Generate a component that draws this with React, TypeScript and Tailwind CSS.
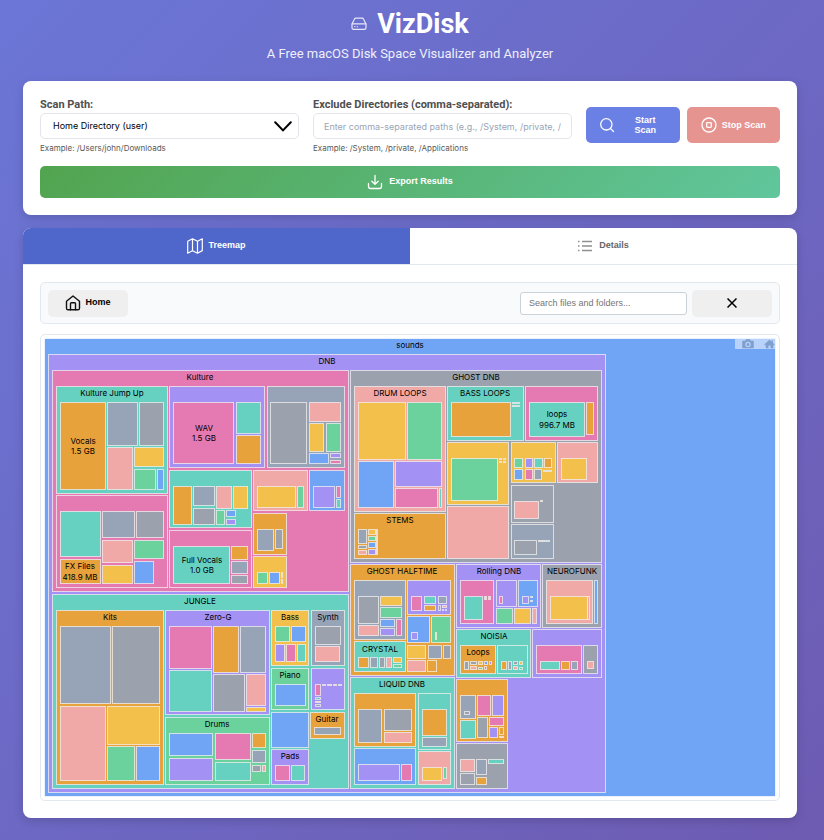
import { useState } from "react";

type Tile = [color: keyof typeof PALETTE, x1: number, y1: number, x2: number, y2: number];
type Label = [text: string, x: number, y: number];

const PALETTE = {
  B: "#70a5f6",
  P: "#a391f4",
  K: "#e57ab3",
  T: "#66d1c0",
  O: "#e8a23b",
  S: "#97a4b7",
  G: "#9ba2ae",
  R: "#f0a9a7",
  Y: "#f3c04c",
  E: "#6bd19d",
};

const TILES: Tile[] = [
  ["P", 48, 354, 606, 793],

  // Kulture
  ["K", 52, 370, 349, 592],
  ["T", 56, 386, 168, 494],
  ["O", 60, 402, 106, 490],
  ["S", 107, 402, 138, 446],
  ["G", 139, 402, 164, 446],
  ["R", 107, 447, 133, 490],
  ["Y", 134, 447, 164, 467],
  ["E", 134, 469, 156, 490],
  ["B", 157, 469, 164, 490],
  ["K", 56, 495, 168, 588],
  ["T", 60, 511, 101, 557],
  ["O", 60, 559, 101, 584],
  ["S", 102, 511, 135, 538],
  ["G", 136, 511, 164, 538],
  ["R", 102, 540, 133, 563],
  ["Y", 102, 565, 133, 584],
  ["E", 134, 540, 164, 559],
  ["B", 134, 561, 154, 584],
  ["P", 169, 386, 265, 468],
  ["K", 173, 402, 234, 464],
  ["T", 236, 402, 261, 434],
  ["O", 236, 435, 261, 464],
  ["S", 267, 386, 345, 468],
  ["G", 270, 402, 307, 464],
  ["R", 309, 402, 341, 422],
  ["Y", 309, 423, 324, 452],
  ["E", 326, 423, 341, 452],
  ["B", 309, 453, 329, 464],
  ["P", 330, 453, 341, 458],
  ["K", 330, 460, 341, 464],
  ["T", 169, 470, 252, 528],
  ["O", 173, 486, 192, 525],
  ["S", 193, 486, 215, 506],
  ["G", 193, 508, 215, 525],
  ["R", 216, 486, 232, 509],
  ["Y", 233, 486, 248, 509],
  ["E", 216, 510, 225, 525],
  ["B", 226, 510, 236, 517],
  ["P", 226, 519, 236, 525],
  ["R", 253, 470, 308, 511],
  ["Y", 257, 486, 296, 508],
  ["E", 297, 486, 304, 508],
  ["B", 309, 470, 345, 511],
  ["P", 313, 486, 335, 508],
  ["K", 336, 486, 341, 498],
  ["T", 336, 499, 341, 508],
  ["K", 169, 530, 252, 588],
  ["T", 173, 546, 230, 584],
  ["O", 231, 546, 248, 560],
  ["S", 231, 561, 248, 574],
  ["G", 231, 575, 248, 584],
  ["O", 253, 513, 287, 555],
  ["S", 257, 529, 274, 551],
  ["G", 275, 529, 283, 549],
  ["Y", 253, 556, 287, 588],
  ["E", 257, 572, 268, 584],
  ["B", 269, 572, 280, 584],
  ["Y", 281, 572, 283, 578],
  ["R", 281, 579, 283, 584],

  // Jungle
  ["T", 52, 594, 349, 789],
  ["O", 56, 610, 164, 785],
  ["S", 60, 626, 111, 704],
  ["G", 112, 626, 160, 704],
  ["R", 60, 706, 106, 781],
  ["Y", 107, 706, 160, 745],
  ["E", 107, 746, 135, 781],
  ["B", 136, 746, 160, 781],
  ["P", 165, 610, 270, 715],
  ["K", 169, 626, 212, 669],
  ["O", 213, 626, 239, 673],
  ["S", 240, 626, 266, 673],
  ["T", 169, 670, 212, 712],
  ["G", 213, 674, 245, 712],
  ["R", 246, 674, 266, 706],
  ["Y", 246, 707, 266, 712],
  ["E", 165, 717, 270, 785],
  ["B", 169, 733, 213, 756],
  ["P", 169, 758, 213, 781],
  ["K", 215, 733, 251, 760],
  ["T", 215, 762, 251, 781],
  ["O", 252, 733, 266, 748],
  ["S", 252, 750, 266, 763],
  ["G", 252, 765, 261, 772],
  ["R", 262, 765, 266, 772],
  ["Y", 271, 610, 309, 666],
  ["E", 275, 626, 290, 642],
  ["B", 291, 626, 306, 642],
  ["P", 275, 644, 285, 662],
  ["K", 286, 644, 296, 662],
  ["T", 297, 644, 306, 662],
  ["S", 311, 610, 345, 666],
  ["G", 315, 626, 341, 645],
  ["R", 315, 646, 340, 662],
  ["E", 271, 668, 309, 710],
  ["B", 275, 684, 306, 706],
  ["P", 311, 668, 345, 710],
  ["K", 315, 684, 321, 696],
  ["T", 315, 697, 321, 700],
  ["Y", 315, 701, 321, 703],
  ["S", 315, 704, 321, 707],
  ["G", 322, 684, 326, 686],
  ["R", 327, 684, 332, 686],
  ["Y", 333, 684, 337, 686],
  ["E", 338, 684, 342, 686],
  ["B", 271, 712, 309, 748],
  ["O", 310, 712, 345, 739],
  ["S", 314, 727, 341, 735],
  ["P", 271, 749, 309, 785],
  ["K", 275, 765, 290, 781],
  ["T", 291, 765, 305, 781],

  // Ghost DNB
  ["G", 350, 370, 602, 563],
  ["R", 354, 386, 446, 512],
  ["Y", 358, 402, 406, 460],
  ["E", 407, 402, 442, 460],
  ["B", 358, 461, 394, 508],
  ["P", 395, 461, 442, 487],
  ["K", 395, 488, 438, 508],
  ["T", 439, 488, 442, 508],
  ["O", 354, 513, 446, 559],
  ["S", 358, 529, 367, 544],
  ["G", 358, 545, 367, 549],
  ["R", 358, 550, 367, 555],
  ["Y", 368, 529, 376, 535],
  ["E", 368, 536, 376, 541],
  ["B", 368, 542, 376, 548],
  ["P", 368, 549, 376, 555],
  ["R", 376, 529, 378, 555],
  ["T", 447, 386, 524, 441],
  ["O", 451, 402, 511, 437],
  ["S", 512, 402, 516, 404],
  ["G", 516, 402, 520, 404],
  ["R", 512, 405, 516, 407],
  ["S", 516, 405, 520, 407],
  ["K", 525, 386, 598, 441],
  ["T", 529, 402, 585, 437],
  ["O", 586, 402, 594, 435],
  ["Y", 447, 442, 509, 505],
  ["E", 451, 458, 498, 501],
  ["R", 499, 458, 502, 460],
  ["G", 503, 458, 506, 460],
  ["R", 499, 461, 502, 463],
  ["R", 503, 461, 506, 463],
  ["R", 447, 506, 509, 559],
  ["Y", 511, 442, 556, 483],
  ["E", 514, 458, 523, 468],
  ["P", 525, 458, 533, 468],
  ["T", 534, 458, 543, 468],
  ["O", 544, 458, 552, 468],
  ["B", 514, 469, 523, 480],
  ["K", 525, 469, 533, 480],
  ["S", 534, 469, 542, 480],
  ["G", 543, 470, 552, 472],
  ["R", 557, 442, 598, 483],
  ["Y", 561, 458, 587, 480],
  ["G", 511, 485, 554, 523],
  ["R", 514, 501, 539, 519],
  ["Y", 540, 500, 543, 502],
  ["S", 511, 524, 554, 559],
  ["G", 514, 540, 537, 555],
  ["R", 538, 540, 541, 542],
  ["Y", 541, 540, 544, 542],
  ["E", 544, 540, 547, 542],
  ["G", 547, 540, 550, 542],

  // Ghost Halftime
  ["O", 350, 564, 455, 676],
  ["S", 354, 580, 406, 640],
  ["G", 358, 596, 379, 624],
  ["R", 358, 625, 379, 636],
  ["Y", 380, 596, 402, 606],
  ["E", 380, 607, 402, 618],
  ["B", 380, 619, 395, 627],
  ["P", 380, 628, 395, 636],
  ["K", 396, 619, 402, 636],
  ["T", 354, 641, 406, 672],
  ["O", 358, 657, 369, 668],
  ["S", 370, 657, 378, 668],
  ["G", 379, 657, 385, 668],
  ["R", 386, 657, 392, 668],
  ["Y", 393, 657, 402, 663],
  ["E", 393, 664, 402, 668],
  ["P", 407, 580, 451, 615],
  ["K", 411, 596, 422, 611],
  ["T", 424, 596, 436, 604],
  ["S", 438, 596, 447, 604],
  ["O", 424, 605, 436, 611],
  ["G", 438, 605, 441, 611],
  ["R", 442, 605, 447, 608],
  ["P", 442, 609, 444, 611],
  ["B", 445, 609, 447, 611],
  ["B", 407, 616, 430, 643],
  ["P", 411, 632, 418, 640],
  ["E", 431, 616, 451, 643],
  ["Y", 435, 632, 437, 640],
  ["Y", 407, 645, 426, 659],
  ["S", 428, 645, 442, 659],
  ["G", 443, 645, 451, 659],
  ["R", 407, 660, 426, 672],
  ["O", 427, 660, 437, 672],

  // Rolling DNB
  ["P", 456, 564, 541, 628],
  ["K", 460, 580, 494, 624],
  ["T", 464, 596, 483, 620],
  ["R", 484, 596, 487, 598],
  ["G", 488, 596, 491, 598],
  ["R", 484, 598, 487, 600],
  ["R", 488, 598, 491, 600],
  ["P", 496, 580, 517, 607],
  ["K", 499, 596, 503, 604],
  ["B", 518, 580, 538, 607],
  ["P", 522, 596, 529, 604],
  ["K", 530, 596, 533, 598],
  ["T", 530, 600, 533, 602],
  ["E", 496, 608, 513, 624],
  ["Y", 514, 608, 531, 624],
  ["R", 532, 608, 537, 624],

  // Neurofunk
  ["G", 542, 564, 602, 628],
  ["R", 546, 580, 593, 624],
  ["Y", 550, 596, 588, 620],
  ["R", 587, 596, 590, 620],
  ["B", 594, 580, 598, 624],

  // Noisia
  ["T", 456, 629, 531, 678],
  ["O", 460, 645, 496, 674],
  ["S", 464, 661, 469, 670],
  ["G", 470, 661, 477, 665],
  ["R", 470, 666, 477, 670],
  ["Y", 478, 661, 483, 665],
  ["E", 478, 667, 483, 670],
  ["B", 484, 661, 488, 665],
  ["P", 489, 661, 492, 665],
  ["K", 484, 666, 487, 670],
  ["T", 497, 645, 528, 674],
  ["O", 501, 661, 507, 670],
  ["S", 508, 661, 512, 670],
  ["G", 513, 661, 518, 665],
  ["R", 513, 666, 518, 670],
  ["Y", 519, 661, 523, 665],
  ["E", 519, 667, 523, 670],
  ["P", 532, 629, 602, 678],
  ["K", 536, 645, 582, 674],
  ["T", 540, 661, 560, 670],
  ["O", 561, 661, 570, 670],
  ["S", 571, 661, 578, 670],
  ["G", 583, 645, 598, 674],
  ["R", 587, 661, 594, 669],

  // Liquid DNB
  ["T", 350, 677, 455, 789],
  ["O", 354, 693, 416, 747],
  ["S", 358, 709, 382, 743],
  ["G", 384, 709, 412, 731],
  ["R", 384, 732, 412, 743],
  ["T", 418, 693, 451, 750],
  ["O", 422, 709, 447, 736],
  ["S", 422, 737, 447, 747],
  ["B", 354, 748, 416, 785],
  ["P", 358, 764, 400, 781],
  ["K", 401, 764, 412, 781],
  ["R", 418, 751, 451, 785],
  ["Y", 422, 767, 442, 781],
  ["E", 443, 767, 447, 779],

  ["O", 456, 679, 508, 742],
  ["S", 460, 695, 476, 719],
  ["G", 464, 711, 470, 715],
  ["K", 477, 695, 491, 716],
  ["P", 492, 695, 504, 716],
  ["T", 460, 720, 476, 739],
  ["G", 477, 717, 488, 738],
  ["K", 489, 717, 504, 726],
  ["P", 489, 727, 498, 738],
  ["O", 499, 727, 504, 735],
  ["Y", 499, 736, 504, 738],

  ["G", 456, 743, 508, 789],
  ["R", 460, 759, 475, 772],
  ["S", 476, 759, 487, 775],
  ["T", 488, 759, 504, 764],
  ["G", 460, 773, 475, 785],
  ["O", 476, 777, 487, 785],
];

const LABELS: Label[] = [
  ["sounds", 410, 348],
  ["DNB", 327, 364],
  ["Kulture", 200, 380],
  ["Kulture Jump Up", 112, 396],
  ["Vocals", 83, 444],
  ["1.5 GB", 83, 454],
  ["FX Files", 80, 569],
  ["418.9 MB", 80, 580],
  ["WAV", 204, 431],
  ["1.5 GB", 204, 441],
  ["Full Vocals", 202, 563],
  ["1.0 GB", 202, 573],
  ["JUNGLE", 200, 604],
  ["Kits", 110, 620],
  ["Zero-G", 218, 620],
  ["Drums", 217, 727],
  ["Bass", 290, 620],
  ["Synth", 328, 620],
  ["Piano", 290, 678],
  ["Guitar", 327, 722],
  ["Pads", 290, 759],
  ["GHOST DNB", 476, 380],
  ["DRUM LOOPS", 400, 396],
  ["STEMS", 400, 523],
  ["BASS LOOPS", 485, 396],
  ["loops", 557, 417],
  ["996.7 MB", 557, 428],
  ["GHOST HALFTIME", 402, 574],
  ["CRYSTAL", 380, 652],
  ["Rolling DNB", 499, 574],
  ["NEUROFUNK", 572, 574],
  ["NOISIA", 494, 639],
  ["Loops", 478, 655],
  ["LIQUID DNB", 402, 687],
];

function Treemap() {
  return (
    <svg
      viewBox="44 338 732 459"
      className="block h-auto w-full font-['Inter',sans-serif]"
      role="img"
      aria-label="Treemap of sounds"
    >
      <rect x="44.5" y="338.5" width="731" height="458" fill={PALETTE.B} stroke="#fff" strokeOpacity="0.7" />
      {TILES.map(([color, x1, y1, x2, y2], i) => (
        <rect
          key={i}
          x={x1 + 0.5}
          y={y1 + 0.5}
          width={x2 - x1 - 1}
          height={y2 - y1 - 1}
          fill={PALETTE[color]}
          stroke="#f2f0f0"
          strokeOpacity="0.75"
        />
      ))}
      {LABELS.map(([text, x, y], i) => (
        <text key={i} x={x} y={y} textAnchor="middle" className="fill-black text-[8px]">
          {text}
        </text>
      ))}
    </svg>
  );
}

function DriveIcon() {
  return (
    <svg viewBox="0 0 16 14" className="h-[14px] w-4" fill="none" stroke="#e6e8fa" strokeLinejoin="round" strokeLinecap="round" strokeWidth="1.2" aria-hidden="true">
      <path d="M1 7 3.4 2.2Q3.8 1.2 4.8 1.2h6.4q1 0 1.4 1L15 7v3.800q0 1.600-1.600 1.600H2.600Q1 12.400 1 10.800z" />
      <path d="M1.200 6.900h13.600M3.800 9.700h.1M6.300 9.700h.1" />
    </svg>
  );
}

function SearchIcon() {
  return (
    <svg viewBox="0 0 24 24" className="size-4 shrink-0" fill="none" stroke="#fff" strokeWidth="1.900" strokeLinecap="round" aria-hidden="true">
      <circle cx="11" cy="11" r="8.500" />
      <path d="m17.200 17.200 4.600 4.600" />
    </svg>
  );
}

function StopIcon() {
  return (
    <svg viewBox="0 0 16 16" className="size-4 shrink-0" fill="none" stroke="#fff" strokeWidth="1.300" aria-hidden="true">
      <circle cx="8" cy="8" r="7" />
      <rect x="5.700" y="5.700" width="4.600" height="4.600" rx="0.800" />
    </svg>
  );
}

function ExportIcon() {
  return (
    <svg viewBox="0 0 16 16" className="size-4 shrink-0" fill="none" stroke="#fff" strokeWidth="1.300" strokeLinecap="round" strokeLinejoin="round" aria-hidden="true">
      <path d="M1.500 9.500v3q0 2 2 2h9q2 0 2-2v-3M8 1.500v8.700M4.800 7.200 8 10.300l3.200-3.100" />
    </svg>
  );
}

function MapIcon() {
  return (
    <svg viewBox="0 0 16 16" className="size-4 shrink-0" fill="none" stroke="#fff" strokeWidth="1.200" strokeLinejoin="round" aria-hidden="true">
      <path d="M.7 3.200 5.500.8l5 2.400L15.300.8v11.800l-4.800 2.600-5-2.400L.7 15.200zM5.500.8v12M10.500 3.200v12" />
    </svg>
  );
}

function ListIcon() {
  return (
    <svg viewBox="0 0 14 12" className="h-3 w-[14px] shrink-0" stroke="#8f8f8f" strokeWidth="1.500" aria-hidden="true">
      <path d="M0 1.500h1.500M4 1.500h10M0 6h1.500M4 6h10M0 10.500h1.500M4 10.500h10" />
    </svg>
  );
}

function HomeIcon() {
  return (
    <svg viewBox="0 0 16 16" className="size-4 shrink-0" fill="none" stroke="#111" strokeWidth="1.400" strokeLinejoin="round" strokeLinecap="round" aria-hidden="true">
      <path d="M1.500 6.200 8 1l6.500 5.200v7q0 1.600-1.600 1.600H3.100q-1.600 0-1.600-1.600z" />
      <path d="M5.500 14.800V8.600q0-.8.8-.8h3.400q.8 0 .8.800v6.200" />
    </svg>
  );
}

function CameraIcon() {
  return (
    <svg viewBox="0 0 12 10" className="h-[10px] w-3" fill="#7f9fcf" aria-hidden="true">
      <path fillRule="evenodd" d="M1.200 1.800h2L4 .3h4l.8 1.500h2q1 0 1 1v5.500q0 1-1 1H1.200q-1 0-1-1V2.800q0-1 1-1zM6 2.700a2.700 2.700 0 1 0 0 5.400 2.700 2.700 0 0 0 0-5.400zm0 1.200a1.500 1.500 0 1 1 0 3 1.500 1.500 0 0 1 0-3z" />
    </svg>
  );
}

function ResetIcon() {
  return (
    <svg viewBox="0 0 11 10" className="h-[10px] w-[11px]" fill="#7f9fcf" aria-hidden="true">
      <path d="M5.500.8 7.600 2.700V1.200h1.300v2.700L10.800 5.600l-.6.6-.9-.7v3.800H6.500V6.400h-2v2.900H1.700V5.500l-.9.700-.6-.6z" />
    </svg>
  );
}

const FIELD = "block h-[26px] w-full rounded-[5px] border border-[#e2e6ea] bg-white text-[9px]";
const FIELD_LABEL = "block font-['Roboto',sans-serif] text-[11px] leading-4 font-bold text-[#4f4f4f]";
const HINT = "mt-1 text-[8px] leading-[10px] text-[#5a5a5a]";

export default function App() {
  const [query, setQuery] = useState("");
  const [exclude, setExclude] = useState("");

  return (
    <div className="min-h-screen bg-[linear-gradient(135deg,#6b76d6_0%,#6e5bb2_100%)] pr-[27px] pb-[23px] pl-[23px] font-['Inter',sans-serif]">
      <header className="flex h-[81px] flex-col items-center pt-2 font-['Roboto',sans-serif] text-white">
        <div className="flex items-center gap-[10px]">
          <DriveIcon />
          <h1 className="text-[27px] leading-8 font-bold">VizDisk</h1>
        </div>
        <p className="mt-1 text-[13px] leading-5 text-[#eeeffb]">A Free macOS Disk Space Visualizer and Analyzer</p>
      </header>

      <section className="rounded-lg bg-white p-[17px] pt-4 shadow-[0_3px_10px_rgba(0,0,0,0.15)]">
        <div className="flex gap-[14px]">
          <div className="min-w-0 flex-1">
            <label htmlFor="path" className={FIELD_LABEL}>
              Scan Path:
            </label>
            <div className="relative">
              <select id="path" className={`${FIELD} appearance-none px-3 text-black`}>
                <option>Home Directory (user)</option>
              </select>
              <svg viewBox="0 0 18 11" className="pointer-events-none absolute top-2 right-[7px] h-[11px] w-[18px]" fill="none" stroke="#000" strokeWidth="2" strokeLinecap="round" aria-hidden="true">
                <path d="m1.200 1.200 7.800 8.200 7.800-8.200" />
              </svg>
            </div>
            <p className={HINT}>Example: /Users/john/Downloads</p>
          </div>
          <div className="min-w-0 flex-1">
            <label htmlFor="exclude" className={FIELD_LABEL}>
              Exclude Directories (comma-separated):
            </label>
            <input
              id="exclude"
              value={exclude}
              onChange={(e) => setExclude(e.target.value)}
              placeholder="Enter comma-separated paths (e.g., /System, /private, /Applications)"
              className={`${FIELD} px-[10px] placeholder:text-[#9aa5b5]`}
            />
            <p className={HINT}>Example: /System, /private, /Applications</p>
          </div>
          <div className="grid h-9 w-[194px] grid-cols-2 gap-[7px] self-center font-['Liberation_Sans',Arial,sans-serif] text-[9px] leading-[10px] font-bold text-white">
            <button className="flex items-center rounded-[5px] bg-[#6a80e4] pr-3 pl-[13px]">
              <SearchIcon />
              <span className="flex-1 pr-2 pl-4">Start Scan</span>
            </button>
            <button className="flex items-center justify-center gap-[5px] rounded-[5px] bg-[#e69490]">
              <StopIcon />
              Stop Scan
            </button>
          </div>
        </div>
        <button className="mt-[13px] flex h-8 w-full items-center justify-center gap-[6px] rounded-[5px] bg-[linear-gradient(135deg,#52a44f,#60c69c)] font-['Liberation_Sans',Arial,sans-serif] text-[9px] font-bold text-white">
          <ExportIcon />
          Export Results
        </button>
      </section>

      <section className="mt-[13px] overflow-hidden rounded-lg bg-white shadow-[0_3px_10px_rgba(0,0,0,0.15)]">
        <div className="flex h-[37px] border-b border-[#e2e8f0] font-['Liberation_Sans',Arial,sans-serif] text-[9px] font-bold" role="tablist">
          <button role="tab" aria-selected="true" className="flex flex-1 items-center justify-center gap-[5px] bg-[#4f67cb] text-white">
            <MapIcon />
            Treemap
          </button>
          <button role="tab" aria-selected="false" className="flex flex-1 items-center justify-center gap-[7px] text-[#666]">
            <ListIcon />
            Details
          </button>
        </div>

        <div className="p-[17px]">
          <div className="flex h-[42px] items-center rounded-[5px] border border-[#e2e8f0] bg-[#f8fafc] px-[7px] font-['Liberation_Sans',Arial,sans-serif] text-[9px]">
            <button className="flex h-[27px] w-20 items-center justify-center gap-1 rounded-[5px] bg-[#efefef] font-bold text-black">
              <HomeIcon />
              Home
            </button>
            <input
              aria-label="Search files and folders"
              value={query}
              onChange={(e) => setQuery(e.target.value)}
              placeholder="Search files and folders..."
              className="ml-auto h-[23px] w-[167px] rounded-[3px] border border-[#ccd2da] bg-white px-2 placeholder:text-[#757575]"
            />
            <button aria-label="Clear search" className="ml-[5px] flex h-[27px] w-20 items-center justify-center rounded-[5px] bg-[#efefef]">
              <svg viewBox="0 0 10 10" className="size-[10px]" stroke="#000" strokeWidth="1.500" aria-hidden="true">
                <path d="m.5.5 9 9M9.500.5l-9 9" />
              </svg>
            </button>
          </div>

          <div className="relative mt-[10px] rounded-[5px] border border-[#e2e8f0] p-[3px]">
            <Treemap />
            <div className="absolute top-1 right-1 flex h-[10px] w-10 items-center justify-between bg-white/50 pl-[7px]">
              <CameraIcon />
              <ResetIcon />
            </div>
          </div>
        </div>
      </section>
    </div>
  );
}
